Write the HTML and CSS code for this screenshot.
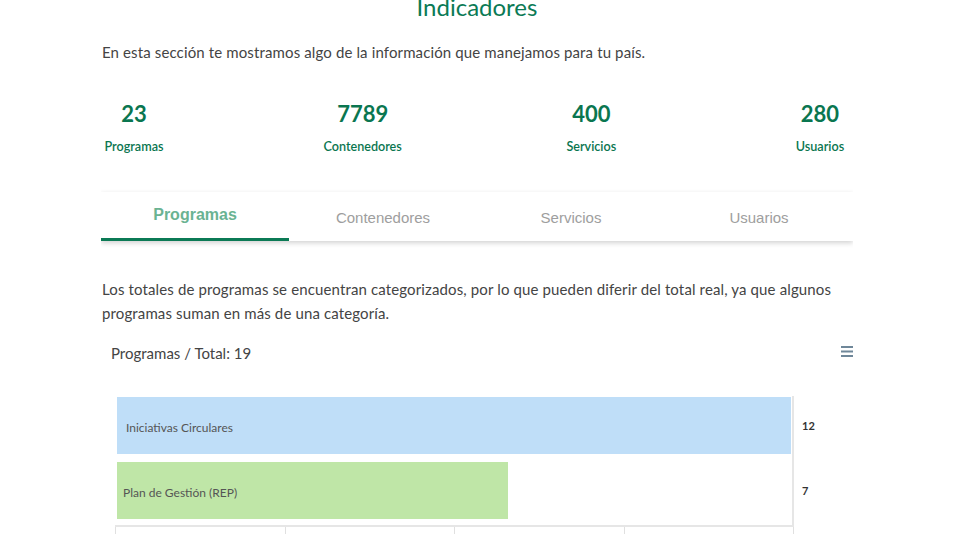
FILE: index.html
```html
<!DOCTYPE html>
<html lang="es">
<head>
<meta charset="utf-8">
<title>Indicadores</title>
<link rel="stylesheet" href="styles.css">
</head>
<body>
<main class="page">
  <h2 class="title">Indicadores</h2>
  <p class="intro">En esta sección te mostramos algo de la información que manejamos para tu país.</p>

  <div class="stats">
    <div class="stat"><span class="stat-num">23</span><span class="stat-label">Programas</span></div>
    <div class="stat"><span class="stat-num">7789</span><span class="stat-label">Contenedores</span></div>
    <div class="stat"><span class="stat-num">400</span><span class="stat-label">Servicios</span></div>
    <div class="stat"><span class="stat-num">280</span><span class="stat-label">Usuarios</span></div>
  </div>

  <nav class="tabs">
    <div class="tab active">Programas</div>
    <div class="tab">Contenedores</div>
    <div class="tab">Servicios</div>
    <div class="tab">Usuarios</div>
  </nav>

  <p class="note">Los totales de programas se encuentran categorizados, por lo que pueden diferir del total real, ya que algunos programas suman en más de una categoría.</p>

  <section class="chart">
    <div class="chart-head">
      <span class="chart-title">Programas / Total: 19</span>
      <svg class="menu-icon" width="12" height="11" viewBox="0 0 12 11">
        <rect x="0" y="0" width="12" height="2" fill="#6f8799"/>
        <rect x="0" y="4.5" width="12" height="2" fill="#6f8799"/>
        <rect x="0" y="9" width="12" height="2" fill="#6f8799"/>
      </svg>
    </div>
    <div class="plot">
      <div class="row first">
        <div class="track"><div class="bar blue" style="width:674px"><span class="bar-label l1">Iniciativas Circulares</span></div></div>
        <span class="value">12</span>
      </div>
      <div class="row last">
        <div class="track"><div class="bar green" style="width:391px"><span class="bar-label l2">Plan de Gestión (REP)</span></div></div>
        <span class="value">7</span>
      </div>
      <div class="axis">
        <span class="tick"></span><span class="tick"></span><span class="tick"></span><span class="tick"></span>
      </div>
    </div>
  </section>
</main>
</body>
</html>
```

FILE: styles.css
```css
* { box-sizing: border-box; }
html, body { margin: 0; padding: 0; background: #fff; }
body { font-family: "Lato", "Open Sans", sans-serif; color: #444; }

.page {
  width: 752px;
  margin-left: 101px;
  overflow: hidden;
}

.title {
  margin: -9px 0 0 0;
  text-align: center;
  font-size: 24px;
  line-height: 32px;
  font-weight: 400;
  color: #0b7a55;
}

.intro {
  margin: 17px 0 0 1px;
  font-size: 15px;
  line-height: 24px;
  letter-spacing: 0.13px;
  color: #444;
}

.stats {
  display: flex;
  justify-content: space-between;
  margin-top: 36px;
}
.stat {
  width: 66px;
  display: flex;
  flex-direction: column;
  align-items: center;
}
.stat-num {
  font-size: 22px;
  line-height: 28px;
  font-weight: 700;
  color: #0a7650;
}
.stat-label {
  margin-top: 11px;
  font-size: 12.6px;
  line-height: 16px;
  font-weight: 600;
  color: #0a7650;
  white-space: nowrap;
}

.tabs {
  display: flex;
  margin-top: 37px;
  height: 49px;
  background: #fff;
  box-shadow: 0 2px 5px rgba(0,0,0,0.18);
}
.tab {
  flex: 1;
  display: flex;
  align-items: center;
  justify-content: center;
  padding-top: 1px;
  font-family: "Liberation Sans", Arial, sans-serif;
  font-size: 15px;
  color: #9e9e9e;
}
.tab.active {
  padding-top: 0;
  padding-bottom: 0;
  font-size: 16px;
  font-weight: 700;
  color: #6ab392;
  border-bottom: 3px solid #0b7a55;
}

.note {
  margin: 36px 0 0 1px;
  font-size: 15px;
  line-height: 24px;
  letter-spacing: 0.13px;
  color: #444;
}

.chart { margin-top: 17px; }
.chart-head {
  display: flex;
  justify-content: space-between;
  align-items: center;
  padding-left: 10px;
  height: 22px;
}
.chart-title {
  font-size: 15px;
  color: #444;
}
.menu-icon { margin-top: -4px; }

.plot {
  margin-top: 32px;
  margin-left: 14px;
}
.row {
  display: flex;
  align-items: center;
}
.track {
  width: 679px;
  padding: 4px 0 4px 2px;
  border-right: 2px solid #e6e6e6;
}
.row.first .track { padding-top: 1px; }
.row.last .track { padding-bottom: 6px; }
.bar {
  height: 57px;
  display: flex;
  align-items: center;
  padding-top: 4px;
}
.bar.blue { background: #bfdef8; }
.bar.green { background: #bfe6a7; }
.bar-label {
  font-size: 12px;
  color: #555;
  white-space: nowrap;
}
.bar-label.l1 { padding-left: 9px; }
.bar-label.l2 { padding-left: 6px; }
.value {
  margin-left: 8px;
  margin-top: -3px;
  font-size: 11px;
  font-weight: 700;
  color: #333;
}
.axis {
  display: flex;
  width: 679px;
  height: 9px;
  border-top: 2px solid #e6e6e6;
}
.tick {
  flex: 1;
  border-left: 1px solid #e0e0e0;
}
.tick:last-child { border-right: 1px solid #e0e0e0; }
```
